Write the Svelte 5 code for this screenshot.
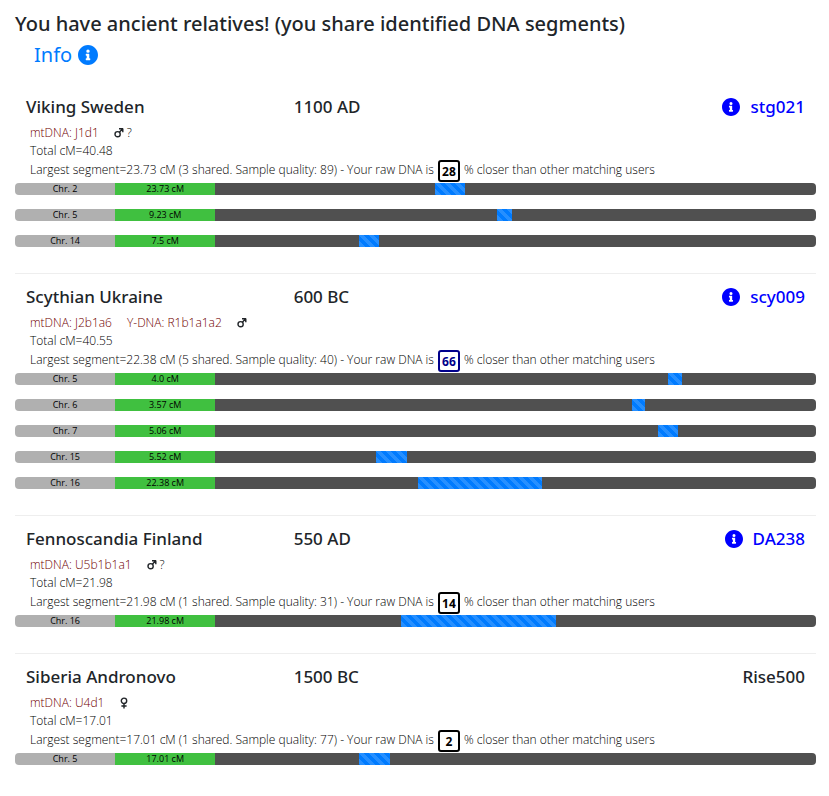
<script>
	const relatives = [
		{
			name: 'Viking Sweden',
			date: '1100 AD',
			sample: 'stg021',
			link: true,
			mtdna: 'J1d1',
			ydna: '',
			sex: 'male',
			sure: false,
			total: '40.48',
			largest: '23.73',
			shared: 3,
			quality: 89,
			closer: 28,
			segments: [
				{ chr: 2, cm: '23.73', start: 36.6, size: 5 },
				{ chr: 5, cm: '9.23', start: 46.9, size: 2.5 },
				{ chr: 14, cm: '7.5', start: 24, size: 3.3 }
			]
		},
		{
			name: 'Scythian Ukraine',
			date: '600 BC',
			sample: 'scy009',
			link: true,
			mtdna: 'J2b1a6',
			ydna: 'R1b1a1a2',
			sex: 'male',
			sure: true,
			total: '40.55',
			largest: '22.38',
			shared: 5,
			quality: 40,
			closer: 66,
			segments: [
				{ chr: 5, cm: '4.0', start: 75.4, size: 2.3 },
				{ chr: 6, cm: '3.57', start: 69.4, size: 2.2 },
				{ chr: 7, cm: '5.06', start: 73.7, size: 3.3 },
				{ chr: 15, cm: '5.52', start: 26.8, size: 5.2 },
				{ chr: 16, cm: '22.38', start: 33.8, size: 20.6 }
			]
		},
		{
			name: 'Fennoscandia Finland',
			date: '550 AD',
			sample: 'DA238',
			link: true,
			mtdna: 'U5b1b1a1',
			ydna: '',
			sex: 'male',
			sure: false,
			total: '21.98',
			largest: '21.98',
			shared: 1,
			quality: 31,
			closer: 14,
			segments: [{ chr: 16, cm: '21.98', start: 31, size: 25.8 }]
		},
		{
			name: 'Siberia Andronovo',
			date: '1500 BC',
			sample: 'Rise500',
			link: false,
			mtdna: 'U4d1',
			ydna: '',
			sex: 'female',
			sure: true,
			total: '17.01',
			largest: '17.01',
			shared: 1,
			quality: 77,
			closer: 2,
			segments: [{ chr: 5, cm: '17.01', start: 24, size: 5.1 }]
		}
	];
</script>

{#snippet infoIcon()}
	<svg class="info-icon" viewBox="8 8 496 496" aria-hidden="true">
		<path
			fill="currentColor"
			d="M256 8C119 8 8 119 8 256s111 248 248 248 248-111 248-248S393 8 256 8zm0 110a42 42 0 1 1 0 84 42 42 0 0 1 0-84zm56 254c0 7-5 12-12 12h-88c-7 0-12-5-12-12v-24c0-7 5-12 12-12h12v-64h-12c-7 0-12-5-12-12v-24c0-7 5-12 12-12h64c7 0 12 5 12 12v100h12c7 0 12 5 12 12v24z"
		/>
	</svg>
{/snippet}

<main>
	<h1>You have ancient relatives! (you share identified DNA segments)</h1>
	<a class="info" href="#info">Info {@render infoIcon()}</a>

	{#each relatives as item}
		<section>
			<header>
				<h2>{item.name}</h2>
				<span class="date">{item.date}</span>
				{#if item.link}
					<a class="sample" href="#{item.sample}">{@render infoIcon()}{item.sample}</a>
				{:else}
					<span class="sample">{item.sample}</span>
				{/if}
			</header>
			<p class="groups">
				<span class="haplo">mtDNA: {item.mtdna}</span>
				{#if item.ydna}
					<span class="haplo">Y-DNA: {item.ydna}</span>
				{/if}
				<span class="sex">
					<svg viewBox="0 0 10 12" role="img" aria-label={item.sex}>
						{#if item.sex == 'male'}
							<circle cx="3.6" cy="7.2" r="2.6" />
							<path d="M5.4 5.2L8.6 1.8M5 1.7h4M8.8 1.5v3.7" />
						{:else}
							<circle cx="5" cy="3.8" r="2.7" />
							<path d="M5 6.5V11.4M2.4 9h5.2" />
						{/if}
					</svg>
					{#if !item.sure}?{/if}
				</span>
			</p>
			<p>Total cM={item.total}</p>
			<p class="largest">
				<span>
					Largest segment={item.largest} cM ({item.shared} shared. Sample quality: {item.quality}) - Your raw DNA is
				</span>
				<b class:high={item.closer > 50}>{item.closer}</b>
				<span>% closer than other matching users</span>
			</p>
			{#each item.segments as seg}
				<div class="bar">
					<span class="chr">Chr. {seg.chr}</span>
					<span class="cm">{seg.cm} cM</span>
					<div class="track">
						<div class="match" style="margin-left: {seg.start}%; width: {seg.size}%"></div>
					</div>
				</div>
			{/each}
		</section>
	{/each}
</main>

<style>
	:global(body) {
		margin: 0;
		background: #fff;
	}

	main {
		padding: 8px 13px 0 15px;
		font-family: 'Open Sans', 'Noto Sans', sans-serif;
		font-size: 12px;
		font-weight: 300;
		color: #212529;
	}

	h1,
	h2,
	p {
		margin: 0;
	}

	h1,
	.info,
	header {
		font-family: 'Noto Sans', 'Open Sans', sans-serif;
		font-weight: 500;
	}

	h1 {
		font-size: 20px;
		line-height: 32px;
	}

	a {
		color: #00f;
		text-decoration: none;
	}

	.info {
		display: flex;
		align-items: center;
		gap: 6px;
		width: max-content;
		margin-left: 19px;
		font-size: 20px;
		line-height: 30px;
		font-weight: 400;
		color: #007bff;
	}

	.info-icon {
		width: 20px;
		height: 20px;
	}

	section {
		padding: 8px 0 12px;
		border-top: 1px solid #eee;
	}

	section:first-of-type {
		margin-top: 13px;
		border-top-color: transparent;
	}

	header {
		display: grid;
		grid-template-columns: 1fr 1fr 1fr;
		padding: 0 11px;
		margin-bottom: 2px;
		font-size: 17px;
		line-height: 30px;
	}

	.date {
		padding-left: 8px;
	}

	h2 {
		font-size: 17px;
		font-weight: 500;
	}

	.sample {
		display: flex;
		align-items: center;
		justify-content: flex-end;
		gap: 10px;
	}

	.sample .info-icon {
		width: 18px;
		height: 18px;
	}

	p {
		padding-left: 15px;
		line-height: 18px;
		color: #000;
	}

	.groups {
		display: flex;
		gap: 15px;
	}

	.haplo {
		color: #700000;
	}

	.sex {
		display: flex;
		align-items: center;
		gap: 3px;
	}

	.sex svg {
		width: 10px;
		height: 12px;
		fill: none;
		stroke: #212529;
		stroke-width: 1.4;
	}

	.largest {
		display: flex;
		align-items: flex-start;
		height: 23px;
		line-height: 20px;
	}

	b {
		box-sizing: border-box;
		min-width: 22px;
		height: 22px;
		margin: 0 4px;
		border: 2px solid #000;
		border-radius: 3px;
		font-weight: 700;
		line-height: 20px;
		text-align: center;
		color: #000;
	}

	b.high {
		border-color: #00008b;
		color: #00008b;
	}

	.bar {
		display: grid;
		grid-template-columns: 1fr 1fr 6fr;
		height: 12px;
		margin-bottom: 14px;
		border-radius: 4px;
		overflow: hidden;
		font-size: 9px;
		font-weight: 400;
		line-height: 12px;
		text-align: center;
		color: #000;
	}

	.chr {
		background: #b0b0b0;
	}

	.cm {
		background: #40c040;
	}

	.track {
		background: #505050;
	}

	.match {
		height: 12px;
		background-color: #007bff;
		background-image: linear-gradient(
			45deg,
			rgba(255, 255, 255, 0.15) 25%,
			transparent 25%,
			transparent 50%,
			rgba(255, 255, 255, 0.15) 50%,
			rgba(255, 255, 255, 0.15) 75%,
			transparent 75%,
			transparent
		);
		background-size: 10px 10px;
	}
</style>
